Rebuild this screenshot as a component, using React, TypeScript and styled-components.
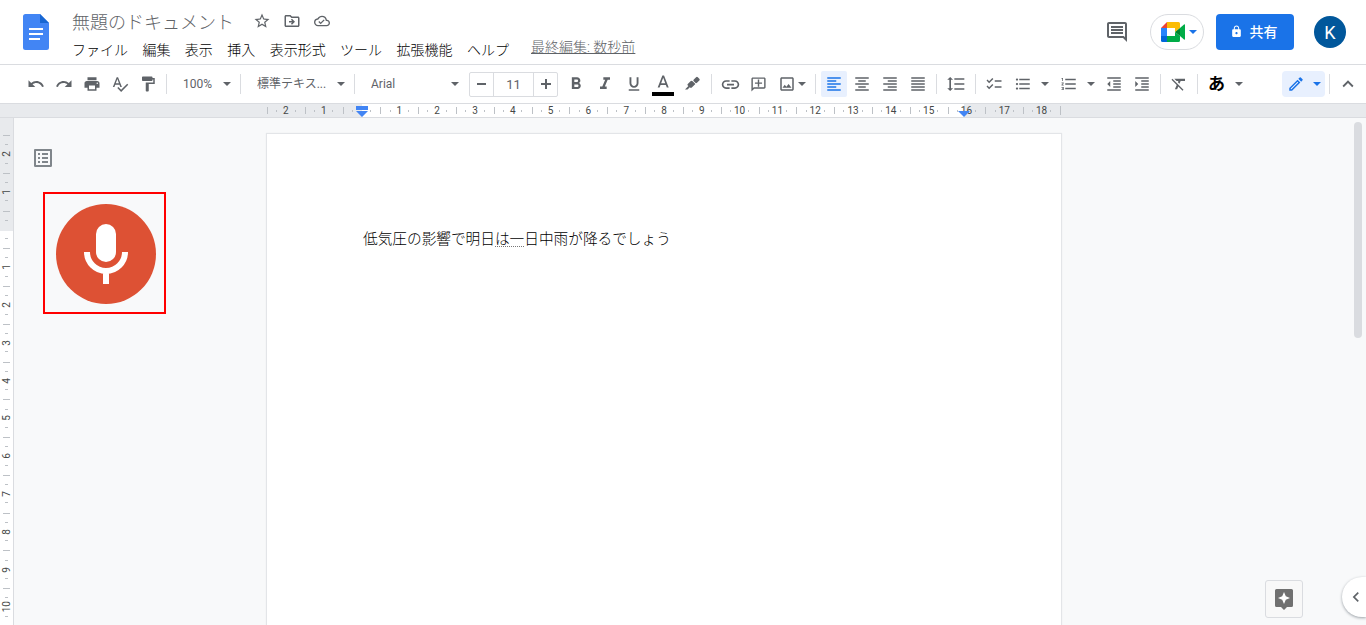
import React from "react";
import styled, { createGlobalStyle, css } from "styled-components";
import {
  MdStarBorder, MdOutlineDriveFileMove, MdOutlineCloudDone, MdOutlineComment, MdLock,
  MdUndo, MdRedo, MdPrint, MdSpellcheck, MdFormatPaint,
  MdFormatBold, MdFormatItalic, MdFormatUnderlined, MdLink, MdOutlineAddComment, MdOutlineImage,
  MdFormatAlignLeft, MdFormatAlignCenter, MdFormatAlignRight, MdFormatAlignJustify,
  MdFormatLineSpacing, MdChecklist, MdFormatListBulleted, MdFormatListNumbered,
  MdFormatIndentDecrease, MdFormatIndentIncrease, MdFormatClear, MdOutlineModeEdit,
  MdExpandLess, MdChevronLeft, MdOutlineListAlt,
} from "react-icons/md";

const GlobalStyle = createGlobalStyle`
  *, *::before, *::after { box-sizing: border-box; }
  body {
    margin: 0;
    overflow: hidden;
    font-family: Roboto, "Noto Sans CJK JP", sans-serif;
    font-size: 14px;
    color: #202124;
    background: #f8f9fa;
  }
  button, input, select { font: inherit; color: inherit; margin: 0; padding: 0; border: 0; background: none; }
  button { cursor: pointer; }
  svg { display: block; flex: none; }
`;

const Shell = styled.div`
  display: flex;
  flex-direction: column;
  height: 100vh;
  overflow: hidden;
`;

/* ---------- header ---------- */

const Header = styled.header`
  display: flex;
  align-items: flex-start;
  height: 65px;
  padding: 0 20px 0 23px;
  background: #fff;
  border-bottom: 1px solid #dadce0;
`;

const LogoLink = styled.a`
  margin: 14px 17px 0 0;
`;

const TitleArea = styled.div`
  display: flex;
  flex-direction: column;
  flex: 1;
  padding-top: 8px;
`;

const TitleRow = styled.div`
  display: flex;
  align-items: center;
  height: 26px;
`;

const TitleInput = styled.input`
  width: 181px;
  height: 26px;
  padding: 0 6px;
  font-size: 18px;
  font-weight: 300;
  color: #5f6368;
`;

const TitleButton = styled.button`
  display: flex;
  align-items: center;
  justify-content: center;
  width: 30px;
  height: 26px;
  color: #5f6368;
`;

const MenuRow = styled.div`
  display: flex;
  align-items: flex-start;
  padding-left: 6px;
`;

const MenuBar = styled.nav`
  display: flex;
  justify-content: space-between;
  width: 437px;
  padding-top: 6px;
`;

const MenuButton = styled.button`
  line-height: 20px;
  font-weight: 300;
  color: #000;
`;

const LastEdit = styled.a`
  margin: 3px 0 0 22px;
  line-height: 20px;
  font-weight: 300;
  color: #5f6368;
  text-decoration: underline;
`;

const HeaderActions = styled.div`
  display: flex;
  align-items: center;
  padding-top: 14px;
`;

const CommentButton = styled.button`
  display: flex;
  margin-right: 21px;
  color: #5f6368;
`;

const MeetButton = styled.button`
  display: flex;
  align-items: center;
  gap: 4px;
  width: 54px;
  height: 36px;
  margin-right: 12px;
  padding-left: 10px;
  border: 1px solid #dadce0;
  border-radius: 18px;
  color: #1a73e8;
`;

const ShareButton = styled.button`
  display: flex;
  align-items: center;
  justify-content: center;
  gap: 7px;
  width: 78px;
  height: 36px;
  margin-right: 20px;
  padding: 0 3px 2px 0;
  border-radius: 4px;
  background: #1a73e8;
  color: #fff;
  font-weight: 500;
`;

const Avatar = styled.button`
  width: 32px;
  height: 32px;
  border-radius: 50%;
  background: #01579b;
  color: #fff;
  font-size: 18px;
  line-height: 34px;
`;

/* ---------- toolbar ---------- */

const Toolbar = styled.div`
  display: flex;
  align-items: center;
  height: 39px;
  padding: 0 3px 0 22px;
  background: #fff;
  border-bottom: 1px solid #dadce0;
  color: #5f6368;
`;

const Group = styled.div<{ $gap?: number }>`
  display: flex;
  align-items: center;
  gap: ${(p) => p.$gap ?? 2}px;
  padding: 0 1px;
`;

const FormatGroup = styled(Group)`
  padding: 0 2px 0 1px;
  gap: 3px;
`;

const PushRight = styled(Group)`
  margin-left: auto;
  gap: 0;
`;

const Separator = styled.span`
  width: 1px;
  height: 20px;
  margin: 0 4px;
  background: #dadce0;
`;

const active = css`
  background: #e8f0fe;
  color: #1a73e8;
`;

const ToolButton = styled.button<{ $active?: boolean; $wide?: boolean }>`
  display: flex;
  align-items: center;
  justify-content: center;
  width: ${(p) => (p.$wide ? 28 : 26)}px;
  height: 26px;
  border-radius: 2px;
  ${(p) => p.$active && active}
`;

const DropButton = styled.button<{ $width: number; $active?: boolean }>`
  display: flex;
  align-items: center;
  justify-content: space-between;
  width: ${(p) => p.$width}px;
  height: 26px;
  padding: 0 4px 0 5px;
  border-radius: 4px;
  ${(p) => p.$active && active}
`;

const Kana = styled.span`
  font-size: 17px;
  font-weight: 700;
  line-height: 28px;
  color: #000;
`;

const SelectBox = styled.label<{ $width: number }>`
  display: grid;
  align-items: center;
  width: ${(p) => p.$width}px;
  height: 26px;

  select, svg { grid-area: 1 / 1; }
  svg { justify-self: end; margin-right: 5px; pointer-events: none; }
`;

const Select = styled.select`
  appearance: none;
  width: 100%;
  height: 26px;
  padding: 0 16px 0 12px;
  font-size: 12px;
`;

const Stepper = styled.div`
  display: flex;
  height: 25px;
  width: 89px;
  margin: 0 4px 0 5px;
  border: 1px solid #dadce0;
  border-radius: 2px;
`;

const StepButton = styled.button`
  display: flex;
  align-items: center;
  justify-content: center;
  flex: 1;
`;

const SizeInput = styled.input`
  width: 41px;
  border: solid #dadce0;
  border-width: 0 1px;
  text-align: center;
  font-size: 13px;
`;

const Mirrored = styled.span`
  transform: scaleX(-1);
`;

/* ---------- rulers ---------- */

const RulerBar = styled.div`
  display: flex;
  justify-content: center;
  flex: none;
  height: 14px;
  padding-right: 38px;
  background: #e8eaed;
  border-bottom: 1px solid #dadce0;
`;

const RulerTrack = styled.div`
  position: relative;
  display: grid;
  grid-template-columns: repeat(21, 1fr);
  width: 794px;
  background: linear-gradient(to right, transparent 95px, #fff 95px 697px, transparent 697px);
  font-size: 10px;
  color: #444746;
`;

const tick = "#bdc1c6";

const RulerCell = styled.span`
  display: flex;
  align-items: center;
  justify-content: center;
  height: 13px;
  background:
    linear-gradient(${tick}, ${tick}) 0 3px / 1px 7px no-repeat,
    linear-gradient(${tick}, ${tick}) 25% 6px / 1px 2px no-repeat,
    linear-gradient(${tick}, ${tick}) 75% 6px / 1px 2px no-repeat;

  &:last-child {
    border-right: 1px solid ${tick};
    border-image: linear-gradient(transparent 3px, ${tick} 3px 10px, transparent 10px) 1;
  }
`;

const Marker = styled.svg<{ $at: number }>`
  position: absolute;
  top: 1px;
  left: ${(p) => p.$at}px;
  z-index: 1;
`;

const Body = styled.div`
  position: relative;
  display: flex;
  flex: 1;
  min-height: 0;
  overflow: hidden;
`;

const SideRuler = styled.div`
  flex: none;
  width: 14px;
  padding-top: 17px;
  border-right: 1px solid #dadce0;
  background: linear-gradient(#e8eaed 113px, #fff 113px);
  overflow: hidden;
`;

const SideTrack = styled.div`
  display: grid;
  grid-template-rows: repeat(13, 1fr);
  height: 491px;
  font-size: 10px;
  color: #444746;
`;

const SideCell = styled.span`
  display: flex;
  align-items: center;
  justify-content: center;
  background:
    linear-gradient(${tick}, ${tick}) 3px 0 / 7px 1px no-repeat,
    linear-gradient(${tick}, ${tick}) 5px 25% / 3px 1px no-repeat,
    linear-gradient(${tick}, ${tick}) 5px 75% / 3px 1px no-repeat;
`;

const SideNumber = styled.span`
  writing-mode: vertical-rl;
  transform: rotate(180deg);
`;

/* ---------- canvas ---------- */

const Canvas = styled.main`
  display: flex;
  flex: 1;
  padding-right: 52px;
`;

const LeftRail = styled.aside`
  flex: 1 1 0;
  min-width: 0;
  padding-top: 28px;
`;

const RightRail = styled.div`
  flex: 1 1 0;
`;

const OutlineButton = styled.button`
  display: flex;
  margin-left: 17px;
  color: #80868b;
`;

const VoicePanel = styled.div`
  display: inline-flex;
  margin: 22px 0 0 29px;
  padding: 10px 8px 8px 11px;
  border: 2px solid #f00;
`;

const MicButton = styled.button`
  width: 100px;
  height: 100px;
  border-radius: 50%;
  background: #dd5134;
`;

const Sheet = styled.article`
  flex: none;
  width: 794px;
  min-height: 1123px;
  margin-top: 16px;
  padding: 95px;
  background: #fff;
  box-shadow: 0 0 1px 1px #e3e5e8;
`;

const Paragraph = styled.p`
  margin: 0 0 0 1px;
  font-family: Arial, "Noto Sans CJK JP", sans-serif;
  font-size: 11pt;
  font-weight: 300;
  line-height: 20px;
  color: #000;
`;

const Suggested = styled.span`
  background: repeating-linear-gradient(to right, #777 0 1px, transparent 1px 2px) 0 100% / 100% 1px no-repeat;
`;

const ScrollThumb = styled.div`
  position: absolute;
  top: 4px;
  right: 4px;
  width: 8px;
  height: 216px;
  border-radius: 4px;
  background: #dadce0;
`;

const ExploreButton = styled.button`
  position: absolute;
  right: 63px;
  bottom: 7px;
  display: flex;
  align-items: center;
  justify-content: center;
  width: 38px;
  height: 38px;
  padding-top: 2px;
  border: 1px solid #dadce0;
  border-radius: 3px;
  background: #f8f8f8;
`;

const PanelToggle = styled.button`
  position: absolute;
  right: 0;
  bottom: 8px;
  display: flex;
  align-items: center;
  justify-content: center;
  width: 24px;
  height: 40px;
  padding-left: 4px;
  border-radius: 20px 0 0 20px;
  background: #fff;
  box-shadow: 0 1px 3px 0 #9aa0a6;
  color: #5f6368;
`;

/* ---------- drawings ---------- */

const Caret = () => (
  <svg width="8" height="4" viewBox="0 0 8 4" fill="currentColor"><path d="M0 0h8L4 4z" /></svg>
);

const DocsLogo = () => (
  <svg width="26" height="36" viewBox="0 0 26 36">
    <path d="M2.500 0H17l9 9v24.500a2.500 2.500 0 0 1-2.500 2.500h-21A2.500 2.500 0 0 1 0 33.500v-31A2.500 2.500 0 0 1 2.500 0z" fill="#4285f4" />
    <path d="M17 0l9 9h-9z" fill="#1967d2" />
    <path d="M6 14h14v2H6zM6 19h14v2H6zM6 24h11v2H6z" fill="#fff" />
  </svg>
);

const MeetLogo = () => (
  <svg width="24" height="20" viewBox="0 0 24 20">
    <path d="M0 6l6-6v6z" fill="#ea4335" />
    <path d="M6 0h11.500A1.500 1.500 0 0 1 19 1.500V6l-5 4V6H6z" fill="#fbbc04" />
    <path d="M0 6h6v8H0z" fill="#2684fc" />
    <path d="M0 14h6v6H1.500A1.500 1.500 0 0 1 0 18.500z" fill="#0066da" />
    <path d="M6 14h8v-4l5 4v4.500a1.500 1.500 0 0 1-1.500 1.500H6z" fill="#00ac47" />
    <path d="M14 10l5-4v8z" fill="#00832d" />
    <path d="M19 6l4-3.600c.5-.4 1-.1 1 .5v14.200c0 .6-.5.900-1 .5L19 14z" fill="#00ac47" />
  </svg>
);

const Minus = () => (
  <svg width="10" height="10" viewBox="0 0 10 10" fill="currentColor"><path d="M0 4h9v2H0z" /></svg>
);

const Plus = () => (
  <svg width="10" height="10" viewBox="0 0 10 10" fill="currentColor"><path d="M0 4h4V0h2v4h4v2H6v4H4V6H0z" /></svg>
);

const TextColor = () => (
  <svg width="22" height="24" viewBox="0 0 22 24" fill="currentColor">
    <path transform="translate(1 1) scale(.85)" d="M11 3L5.500 17h2.250l1.120-3h6.250l1.120 3h2.250L13 3h-2zm-1.380 9L12 5.670 14.380 12H9.620z" />
    <path d="M0 20h22v4H0z" fill="#000" />
  </svg>
);

const Highlighter = () => (
  <svg width="16" height="18" viewBox="0 0 16 18" fill="currentColor">
    <path d="M9.800 4.600l2.300-2.300a1.200 1.200 0 0 1 1.700 0l1.500 1.500a1.200 1.200 0 0 1 0 1.700L13 7.800a1.200 1.200 0 0 1-1.700 0L9.800 6.300a1.200 1.200 0 0 1 0-1.700z" />
    <path d="M8.600 6.200l2.800 2.800-3.600 3.600a1.200 1.200 0 0 1-1.700 0l-.3-.3-2.300 2.300H1l3.400-3.600-.6-.5a1 1 0 0 1 0-1.500l2.700-2.800a1.500 1.500 0 0 1 2.100 0z" />
  </svg>
);

const Mic = () => (
  <svg width="100" height="100" viewBox="0 0 100 100">
    <rect x="40" y="20" width="20" height="38" rx="10" fill="#fff" />
    <path d="M31 48a19 19 0 0 0 38 0M50 67v13" fill="none" stroke="#fff" strokeWidth="6" />
  </svg>
);

const Explore = () => (
  <svg width="18" height="22" viewBox="0 0 18 22">
    <path d="M1.500 0h15A1.500 1.500 0 0 1 18 1.500v15a1.500 1.500 0 0 1-1.500 1.500H12l-3 3-3-3H1.500A1.500 1.500 0 0 1 0 16.500v-15A1.500 1.500 0 0 1 1.500 0z" fill="#707070" />
    <path d="M9 3l1.800 4.200L15 9l-4.200 1.800L9 15l-1.800-4.200L3 9l4.200-1.800z" fill="#fff" />
  </svg>
);

/* ---------- page ---------- */

const menus = ["ファイル", "編集", "表示", "挿入", "表示形式", "ツール", "拡張機能", "ヘルプ"];
const rulerMarks = Array.from({ length: 21 }, (_, i) => Math.abs(i - 2) || "");
const sideMarks = [2, 1, "", 1, 2, 3, 4, 5, 6, 7, 8, 9, 10];

const Tool = ({ label, icon: Icon, size = 18, ...rest }: any) => (
  <ToolButton aria-label={label} {...rest}><Icon size={size} /></ToolButton>
);

const Picker = ({ label, width, value }: { label: string; width: number; value: string }) => (
  <SelectBox $width={width}>
    <Select aria-label={label}><option>{value}</option></Select>
    <Caret />
  </SelectBox>
);

export default function App() {
  return (
    <Shell>
      <GlobalStyle />
      <Header>
        <LogoLink href="#" aria-label="ドキュメント ホーム"><DocsLogo /></LogoLink>
        <TitleArea>
          <TitleRow>
            <TitleInput aria-label="名前の変更" defaultValue="無題のドキュメント" />
            <TitleButton aria-label="スター"><MdStarBorder size={18} /></TitleButton>
            <TitleButton aria-label="移動"><MdOutlineDriveFileMove size={18} /></TitleButton>
            <TitleButton aria-label="保存状況"><MdOutlineCloudDone size={16} /></TitleButton>
          </TitleRow>
          <MenuRow>
            <MenuBar>{menus.map((m) => <MenuButton key={m}>{m}</MenuButton>)}</MenuBar>
            <LastEdit href="#">最終編集: 数秒前</LastEdit>
          </MenuRow>
        </TitleArea>
        <HeaderActions>
          <CommentButton aria-label="コメント履歴"><MdOutlineComment size={24} /></CommentButton>
          <MeetButton aria-label="Meet"><MeetLogo /><Caret /></MeetButton>
          <ShareButton><MdLock size={13} />共有</ShareButton>
          <Avatar aria-label="アカウント">K</Avatar>
        </HeaderActions>
      </Header>

      <Toolbar role="toolbar">
        <Group>
          <Tool label="元に戻す" icon={MdUndo} />
          <Tool label="やり直し" icon={MdRedo} />
          <Tool label="印刷" icon={MdPrint} />
          <Tool label="スペルチェック" icon={MdSpellcheck} />
          <Tool label="書式を貼り付け" icon={MdFormatPaint} />
        </Group>
        <Separator />
        <Picker label="ズーム" width={65} value="100%" />
        <Separator />
        <Picker label="スタイル" width={105} value="標準テキス..." />
        <Separator />
        <Picker label="フォント" width={105} value="Arial" />
        <Stepper>
          <StepButton aria-label="縮小"><Minus /></StepButton>
          <SizeInput aria-label="フォントサイズ" defaultValue="11" />
          <StepButton aria-label="拡大"><Plus /></StepButton>
        </Stepper>
        <FormatGroup>
          <Tool label="太字" icon={MdFormatBold} size={20} />
          <Tool label="斜体" icon={MdFormatItalic} size={20} />
          <Tool label="下線" icon={MdFormatUnderlined} />
          <Tool label="テキストの色" icon={TextColor} />
          <Tool label="ハイライトの色" icon={Highlighter} />
        </FormatGroup>
        <Separator />
        <Group>
          <Tool label="リンク" icon={MdLink} size={21} />
          <ToolButton aria-label="コメントを追加"><Mirrored><MdOutlineAddComment size={17} /></Mirrored></ToolButton>
          <DropButton $width={37} aria-label="画像を挿入"><MdOutlineImage size={18} /><Caret /></DropButton>
        </Group>
        <Separator />
        <Group>
          <Tool label="左揃え" icon={MdFormatAlignLeft} $active />
          <Tool label="中央揃え" icon={MdFormatAlignCenter} />
          <Tool label="右揃え" icon={MdFormatAlignRight} />
          <Tool label="両端揃え" icon={MdFormatAlignJustify} />
        </Group>
        <Separator />
        <Group><Tool label="行間隔" icon={MdFormatLineSpacing} size={20} $wide /></Group>
        <Separator />
        <Group>
          <Tool label="チェックリスト" icon={MdChecklist} />
          <DropButton $width={44} aria-label="箇条書き"><MdFormatListBulleted size={18} /><Caret /></DropButton>
          <DropButton $width={44} aria-label="番号付きリスト"><MdFormatListNumbered size={18} /><Caret /></DropButton>
          <Tool label="インデント減" icon={MdFormatIndentDecrease} />
          <Tool label="インデント増" icon={MdFormatIndentIncrease} />
        </Group>
        <Separator />
        <Group><Tool label="書式をクリア" icon={MdFormatClear} /></Group>
        <Separator />
        <Group><DropButton $width={44} aria-label="入力ツール"><Kana>あ</Kana><Caret /></DropButton></Group>
        <PushRight>
          <DropButton $width={43} $active aria-label="編集モード"><MdOutlineModeEdit size={18} /><Caret /></DropButton>
          <Separator />
          <Tool label="メニューを非表示" icon={MdExpandLess} size={22} $wide />
        </PushRight>
      </Toolbar>

      <RulerBar>
        <RulerTrack>
          <Marker $at={89} width="12" height="12" viewBox="0 0 12 12" fill="#4285f4"><path d="M0 1h12v4H0zM0 6h12l-6 6z" /></Marker>
          <Marker $at={691} width="12" height="12" viewBox="0 0 12 12" fill="#4285f4"><path d="M0 6h12l-6 6z" /></Marker>
          {rulerMarks.map((n, i) => <RulerCell key={i}>{n}</RulerCell>)}
        </RulerTrack>
      </RulerBar>

      <Body>
        <SideRuler>
          <SideTrack>
            {sideMarks.map((n, i) => <SideCell key={i}><SideNumber>{n}</SideNumber></SideCell>)}
          </SideTrack>
        </SideRuler>
        <Canvas>
          <LeftRail>
            <OutlineButton aria-label="ドキュメントの概要を表示"><MdOutlineListAlt size={24} /></OutlineButton>
            <VoicePanel><MicButton aria-label="音声入力"><Mic /></MicButton></VoicePanel>
          </LeftRail>
          <Sheet>
            <Paragraph>低気圧の影響で明日<Suggested>は一</Suggested>日中雨が降るでしょう</Paragraph>
          </Sheet>
          <RightRail />
        </Canvas>
        <ScrollThumb />
        <ExploreButton aria-label="データ探索"><Explore /></ExploreButton>
        <PanelToggle aria-label="サイドパネルを表示"><MdChevronLeft size={20} /></PanelToggle>
      </Body>
    </Shell>
  );
}
